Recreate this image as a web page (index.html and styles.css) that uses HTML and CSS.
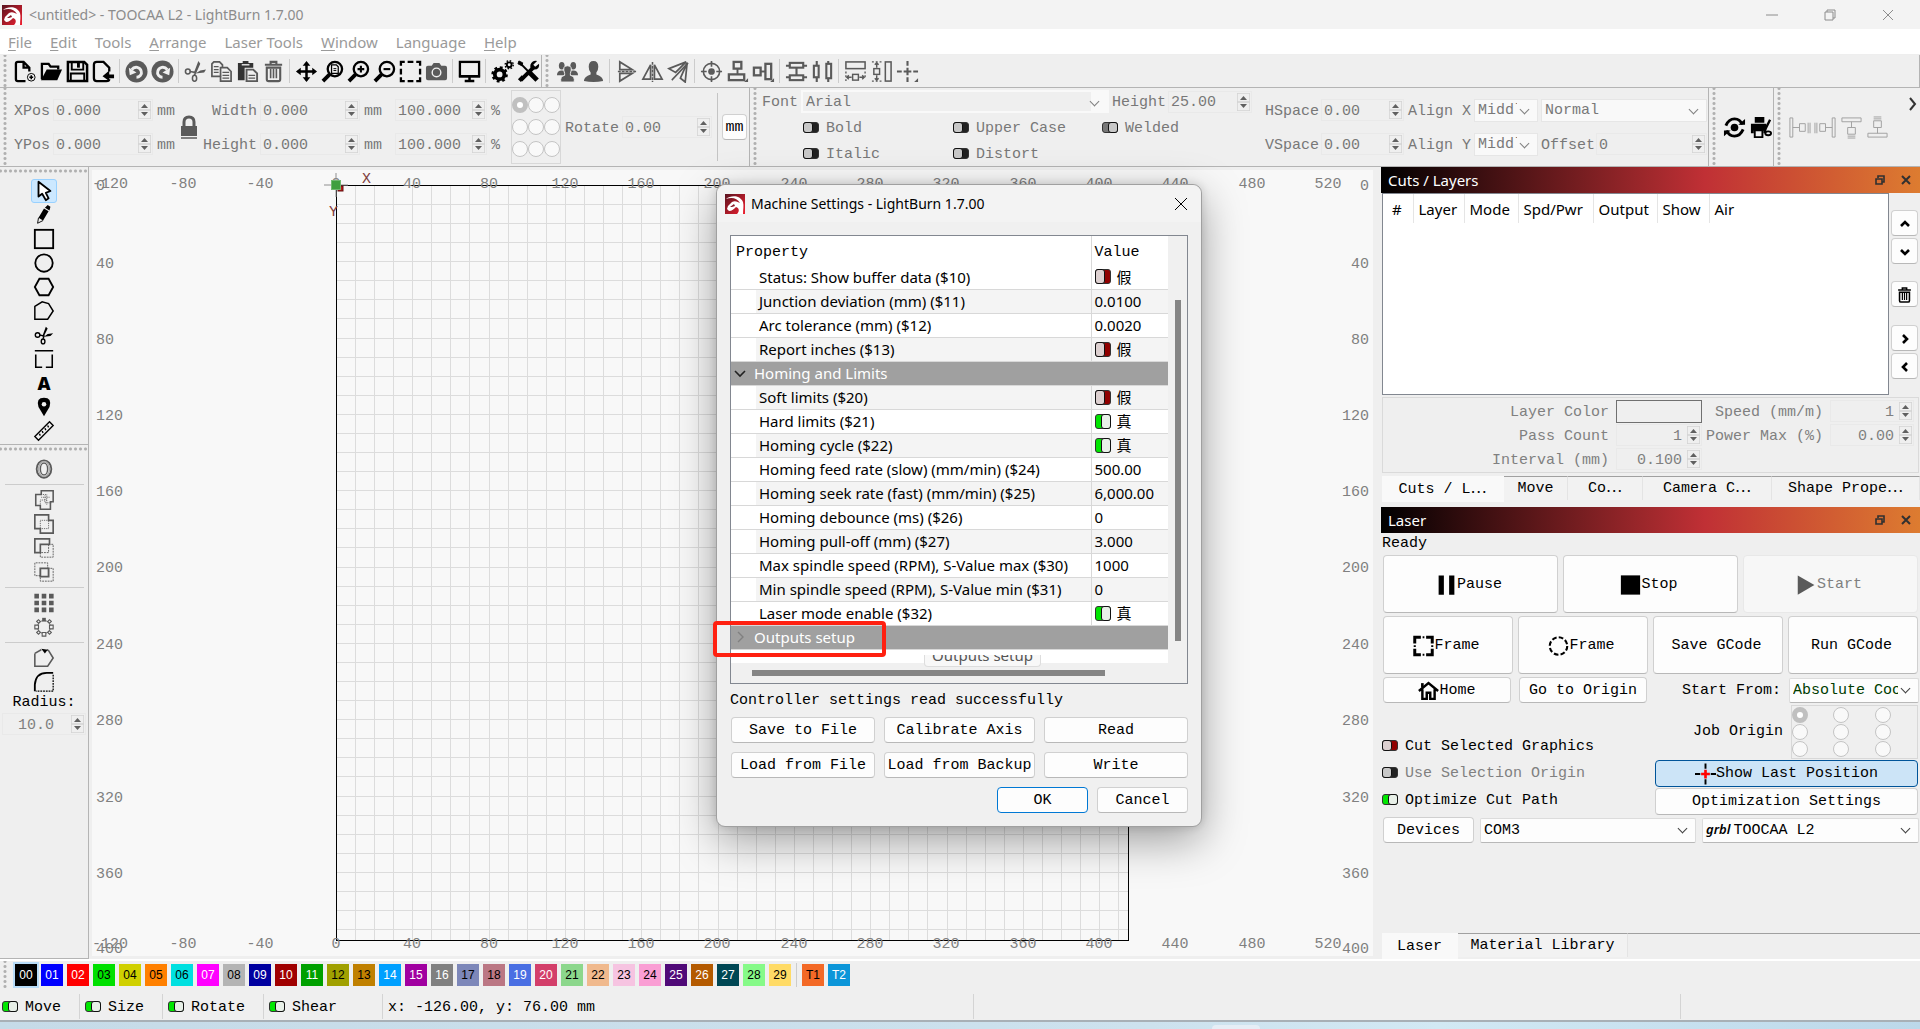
FILE: index.html
```html
<!DOCTYPE html>
<html lang="en">
<head>
<meta charset="utf-8">
<title>&lt;untitled&gt; - TOOCAA L2 - LightBurn 1.7.00</title>
<link rel="stylesheet" href="styles.css">
</head>
<body>
<svg class="defs" aria-hidden="true">
<defs>
<linearGradient id="red" x1="0" y1="0" x2="1" y2="1"><stop offset="0" stop-color="#5a1420"/><stop offset="1" stop-color="#f02030"/></linearGradient>
<symbol id="logo" viewBox="0 0 20 20"><rect width="20" height="20" fill="url(#red)"/><path d="M1 5C6 1 15 1 18 8C19 12 18 15 18 20H12C15 17 14 14 11 13C9 15 7 17 4 17L2 15L3 12L7 8C10 6 13 8 15 9C12 4 7 3 1 5Z" fill="#fff"/><path d="M5 13L9 10L10 12L7 13Z" fill="#8a1826"/></symbol>
<symbol id="new" viewBox="0 0 24 24"><path d="M12 22H4Q2 22 2 20V4Q2 2 4 2H10L16 8V12M10 2V8H16" stroke-width="2.4"/><circle cx="18" cy="18" r="4"/><path d="M18 16V20M16 18H20" stroke-width="1.6"/></symbol>
<symbol id="open" viewBox="0 0 24 24"><path d="M2 20V4H9L11 7H19V10" stroke-width="2.4"/><path d="M7 10H23L18 21H1Z" fill="currentColor" stroke="none"/></symbol>
<symbol id="save" viewBox="0 0 24 24"><path d="M2 2H19L22 5V22H2Z" stroke-width="2.6"/><path d="M6 2H18V10H6ZM5 14H19V22H5Z" stroke-width="2"/><path d="M13 3V8" stroke-width="3"/></symbol>
<symbol id="import" viewBox="0 0 24 24"><path d="M18 12V8L12 2H5Q2 2 2 5V19Q2 22 5 22H15Q18 22 18 20" stroke-width="2.4"/><path d="M11 17L18 11V15H23V19H18V22Z" fill="currentColor" stroke="none"/></symbol>
<symbol id="undo" viewBox="0 0 24 24"><circle cx="12" cy="12" r="11.500" fill="currentColor" stroke="none"/><path d="M7 10C10 6 16 7 17 12C18 15 15 18 12 18" stroke="#efefef" stroke-width="3"/><path d="M4 8L12 13L5 16Z" fill="#efefef" stroke="none"/></symbol>
<symbol id="redo" viewBox="0 0 24 24"><circle cx="12" cy="12" r="11.500" fill="currentColor" stroke="none"/><path d="M17 10C14 6 8 7 7 12C6 15 9 18 12 18" stroke="#efefef" stroke-width="3"/><path d="M20 8L12 13L19 16Z" fill="#efefef" stroke="none"/></symbol>
<symbol id="cut" viewBox="0 0 24 24"><circle cx="4" cy="12" r="2.5" stroke-width="1.6"/><ellipse cx="11" cy="19" rx="2.2" ry="3.2" stroke-width="1.6"/><path d="M6 12L12 13L11 16" stroke-width="1.6"/><path d="M10 14L15 1L17 4L13 13ZM12 14L17 11L23 10L21 13Z" fill="currentColor" stroke="none"/></symbol>
<symbol id="copy" viewBox="0 0 24 24"><path d="M12 17H2V4L4 2H10L13 5V7M11 8H18L22 12V22H11Z" stroke-width="1.8"/><path d="M4 7H9M4 10H9M4 13H9M13 13H20M13 16H20M13 19H20" stroke-width="1.3"/></symbol>
<symbol id="paste" viewBox="0 0 24 24"><path d="M2 3H7V1H13V3H18V8H9V21H2Z" fill="#333" stroke="none"/><path d="M6 5H14" stroke="#efefef" stroke-width="1.4"/><path d="M11 10H18L22 14V22H11Z" stroke-width="2"/><path d="M13 16H20M13 19H20" stroke-width="1.3"/></symbol>
<symbol id="trash" viewBox="0 0 24 24"><path d="M3 5H21M9 4V2H15V4M5 8V20Q5 22 7 22H17Q19 22 19 20V8Z" stroke-width="2.2"/><path d="M9 9V19M12 9V19M15 9V19" stroke-width="1.7"/></symbol>
<symbol id="move" viewBox="0 0 24 24"><path d="M12 3V21M3 12H21" stroke-width="2.6"/><path d="M12 1L16 6H8ZM12 23L16 18H8ZM1 12L6 8V16ZM23 12L18 8V16Z" fill="currentColor" stroke="none"/></symbol>
<symbol id="zpage" viewBox="0 0 24 24"><circle cx="14.500" cy="9.500" r="7.500" stroke-width="2.400"/><path d="M9 15L2 22" stroke-width="4"/><path d="M11 5H16L18 7V14H11Z" stroke-width="1.3"/><path d="M13 9H16M13 11H16" stroke-width="1"/></symbol>
<symbol id="zin" viewBox="0 0 24 24"><circle cx="14.500" cy="9.500" r="7.500" stroke-width="2.400"/><path d="M9 15L2 22" stroke-width="4"/><path d="M14.500 6V13M11 9.500H18" stroke-width="2.200"/></symbol>
<symbol id="zout" viewBox="0 0 24 24"><circle cx="14.500" cy="9.500" r="7.500" stroke-width="2.400"/><path d="M9 15L2 22" stroke-width="4"/><path d="M11 9.500H18" stroke-width="2.200"/></symbol>
<symbol id="frame" viewBox="0 0 24 24"><path d="M2 6V2H6M9 2H15M18 2H22V6M22 9V15M22 18V22H18M15 22H9M6 22H2V18M2 15V9" stroke-width="2.400"/></symbol>
<symbol id="camera" viewBox="0 0 24 24"><path d="M1 8Q1 6 3 6H7L9 3H15L17 6H21Q23 6 23 8V19Q23 21 21 21H3Q1 21 1 19Z" fill="currentColor" stroke="none"/><circle cx="12" cy="13" r="4.500" stroke="#efefef" stroke-width="1.500"/></symbol>
<symbol id="monitor" viewBox="0 0 24 24"><rect x="2" y="2" width="20" height="15" stroke-width="2.400"/><path d="M1 17H23M12 17V21M7 22H17" stroke-width="2.600"/></symbol>
<symbol id="gears" viewBox="0 0 24 24"><circle cx="9" cy="15" r="5" stroke-width="4"/><circle cx="9" cy="15" r="7.300" stroke-width="2.600" stroke-dasharray="2.900 2.830"/><circle cx="19" cy="5" r="2.500" stroke-width="2"/><circle cx="19" cy="5" r="4.200" stroke-width="1.500" stroke-dasharray="1.650 1.650"/></symbol>
<symbol id="tools" viewBox="0 0 24 24"><path d="M21 21L13 13" stroke-width="5"/><path d="M13 13L4 4" stroke-width="2"/><path d="M2 1L6 3L5 6L1 4Z" fill="currentColor"/><path d="M4 21L17 8" stroke-width="4"/><path d="M21 1L17 5L19 7L23 4Q24 10 18 10Q13 10 14 5Q16 0 21 1ZM1 20L5 16L8 19L4 23Z" fill="currentColor" stroke="none"/></symbol>
<symbol id="group" viewBox="0 0 24 24"><g fill="currentColor" stroke="none"><ellipse cx="6" cy="6" rx="3" ry="4"/><ellipse cx="18" cy="6" rx="3" ry="4"/><path d="M1 16Q1 11 6 11Q12 11 12 16ZM12 16Q12 11 18 11Q23 11 23 16Z"/></g><g fill="currentColor" stroke="#efefef" stroke-width="1"><path d="M5 23Q4 17 9 16V14Q6 6 12 6Q18 6 15 14V16Q20 17 19 23Z"/></g></symbol>
<symbol id="person" viewBox="0 0 24 24"><path d="M2 22Q2 17 9 15V13Q7 11 7 7Q7 1 12 1Q17 1 17 7Q17 11 15 13V15Q22 17 22 22Q12 24 2 22Z" fill="currentColor" stroke="none"/></symbol>
<symbol id="flipv" viewBox="0 0 24 24"><path d="M5 10V2L18 10ZM5 14V22L18 14Z" stroke-width="1.800"/><path d="M3 12H22" stroke-width="1.600" stroke-dasharray="3 1"/></symbol>
<symbol id="fliph" viewBox="0 0 24 24"><path d="M10 20H2L10 5ZM14 20H22L14 5Z" stroke-width="1.800"/><path d="M12 2V23" stroke-width="1.600" stroke-dasharray="3 1"/></symbol>
<symbol id="flipd" viewBox="0 0 24 24"><path d="M2 9L20 2L9 13ZM14 19L21 3L19 23Z" stroke-width="1.800"/><path d="M5 21L22 3" stroke-width="1.600"/></symbol>
<symbol id="target" viewBox="0 0 24 24"><circle cx="12" cy="12" r="8.500" stroke-width="1.700"/><circle cx="12" cy="12" r="3.500" fill="currentColor" stroke="none"/><path d="M12 1V7M12 17V23M1 12H7M17 12H23" stroke-width="1.700"/></symbol>
<symbol id="alv" viewBox="0 0 24 24"><rect x="8" y="2" width="8" height="7" stroke-width="2.400"/><rect x="3" y="15" width="16" height="6" stroke-width="2.400"/><path d="M12 9V15" stroke-width="2"/><path d="M23 19V23H19Z" fill="currentColor" stroke="none"/></symbol>
<symbol id="alh" viewBox="0 0 24 24"><rect x="2" y="8" width="7" height="8" stroke-width="2.400"/><rect x="14" y="4" width="6" height="16" stroke-width="2.400"/><path d="M9 12H14" stroke-width="2"/><path d="M23 19V23H19Z" fill="currentColor" stroke="none"/></symbol>
<symbol id="divv" viewBox="0 0 24 24"><rect x="5" y="3" width="14" height="5" stroke-width="2.200"/><rect x="5" y="16" width="14" height="5" stroke-width="2.200"/><path d="M1 6H5M19 6H23M1 18H5M19 18H23M12 8V16" stroke-width="2.200"/></symbol>
<symbol id="divh" viewBox="0 0 24 24"><rect x="3" y="6" width="5" height="12" stroke-width="2.200"/><rect x="16" y="4" width="5" height="15" stroke-width="2.200"/><path d="M6 1V6M6 18V23M18 1V4M18 19V23" stroke-width="2.200"/></symbol>
<symbol id="samew" viewBox="0 0 24 24"><rect x="2" y="2" width="20" height="7" stroke-width="1.600"/><path d="M2 12V23M22 12V18" stroke-width="1.400" stroke-dasharray="2 2"/><rect x="9" y="15" width="6" height="6" stroke-width="1.500"/><path d="M3 18H8M16 18H21M5 16L3 18L5 20M19 16L21 18L19 20" stroke-width="1.500"/></symbol>
<symbol id="sameh" viewBox="0 0 24 24"><rect x="16" y="2" width="6" height="20" stroke-width="1.600"/><path d="M2 2H12M2 22H12" stroke-width="1.400" stroke-dasharray="2 2"/><rect x="4" y="9" width="6" height="6" stroke-width="1.500"/><path d="M7 3V8M7 16V21M5 5L7 3L9 5M5 19L7 21L9 19" stroke-width="1.500"/></symbol>
<symbol id="cross" viewBox="0 0 24 24"><path d="M12 1V6M12 8V16M12 18V23M1 12H6M8 12H16M18 12H23" stroke-width="2.200"/><path d="M23 19V23H19Z" fill="currentColor" stroke="none"/></symbol>
<symbol id="lock" viewBox="0 0 18 24"><rect x="1" y="11" width="16" height="10" fill="currentColor" stroke="none"/><path d="M4 11V7Q4 2 9 2Q14 2 14 7V11" stroke-width="3"/><path d="M1 23H17" stroke-width="1.500"/></symbol>
<symbol id="cycle" viewBox="0 0 24 24"><path d="M3 10Q6 3 12 3Q18 3 20 9M21 14Q18 21 12 21Q6 21 4 15" stroke-width="3"/><path d="M16 9H23V3ZM8 15H1V21Z" fill="currentColor" stroke="none"/><circle cx="12" cy="12" r="4" fill="currentColor" stroke="none"/></symbol>
<symbol id="printcut" viewBox="0 0 24 24"><path d="M6 1H16V7H6ZM2 8H18V18H15V15H5V18H2Z" fill="currentColor" stroke="none"/><path d="M6 15H14V22H6Z" stroke-width="2"/><path d="M22 4L16 16" stroke-width="2.500"/><ellipse cx="20" cy="18" rx="3" ry="2" stroke-width="2"/></symbol>
<symbol id="dockl" viewBox="0 0 24 24"><path d="M2 2H5V22H2ZM12 8H18V16H12ZM5 12H12M21 7V18M23 7V18" stroke-width="1"/></symbol>
<symbol id="dockr" viewBox="0 0 24 24"><path d="M22 2H19V22H22ZM12 8H6V16H12ZM19 12H12M3 7V18M1 7V18" stroke-width="1"/></symbol>
<symbol id="dockt" viewBox="0 0 24 24"><path d="M2 2H22V6H2ZM8 12H16V19H8ZM12 6V12M8 21H16M8 23H16" stroke-width="1"/></symbol>
<symbol id="dockb" viewBox="0 0 24 24"><path d="M2 22H22V18H2ZM8 12H16V5H8ZM12 18V12M8 3H16M8 1H16" stroke-width="1"/></symbol>
<symbol id="arrow" viewBox="0 0 24 24"><path d="M6 2V18L10 15L14 22L17 20L14 14L19 12Z" stroke-width="2" fill="#fff" stroke-linejoin="round"/></symbol>
<symbol id="pencil" viewBox="0 0 24 24"><path d="M13 4L16 1L19 3L18 7ZM12 5L17 8L11 18L6 15Z" fill="currentColor" stroke="none"/><path d="M6 15L5 21L11 18" stroke-width="1"/></symbol>
<symbol id="sq" viewBox="0 0 24 24"><rect x="2" y="2" width="20" height="20"/></symbol>
<symbol id="circ" viewBox="0 0 24 24"><circle cx="12" cy="12" r="9.500"/></symbol>
<symbol id="hex" viewBox="0 0 24 24"><path d="M7 3H17L22 12L17 21H7L2 12Z"/></symbol>
<symbol id="poly" viewBox="0 0 24 24"><path d="M2 7L10 2L17 4L22 12L16 21H2Z" stroke-width="1.600"/></symbol>
<symbol id="scis" viewBox="0 0 24 24"><circle cx="5" cy="12" r="2.500" stroke-width="1.500"/><ellipse cx="11" cy="19" rx="2" ry="2.700" stroke-width="1.500"/><path d="M7 12L12 13L11 16" stroke-width="1.500"/><path d="M10 14L14 3L16 5L12 13ZM12 14L16 11L22 10L19 13Z" fill="currentColor" stroke="none"/></symbol>
<symbol id="tab" viewBox="0 0 24 24"><path d="M2 3H22M3 7V21H10M14 21H21V7" stroke-width="1.700"/></symbol>
<symbol id="pin" viewBox="0 0 24 24"><path d="M12 22L6 12Q3 2 12 2Q21 2 18 12Z" fill="currentColor" stroke="none"/><circle cx="12" cy="9" r="2.500" fill="#efefef" stroke="none"/></symbol>
<symbol id="ruler" viewBox="0 0 24 24"><path d="M2 18L18 2L22 6L6 22ZM7 15L8 17M10 12L11 14M13 9L14 11M16 6L17 8" stroke-width="1.500"/></symbol>
<symbol id="offset" viewBox="0 0 24 24"><ellipse cx="12" cy="12" rx="8" ry="9.500" stroke-width="2"/><ellipse cx="12" cy="12" rx="4" ry="6.500" stroke-width="1.600"/><ellipse cx="12" cy="12" rx="6" ry="8" stroke="#aaa" stroke-width="1.500"/></symbol>
<symbol id="weld" viewBox="0 0 24 24"><path d="M3 6H9V2H22V14H19V22H8V18H3Z" stroke-width="1.700"/><path d="M9 6H15V18M9 9H19M8 18V12H15M13 7V15H21" stroke-width="1" stroke-dasharray="1 1"/></symbol>
<symbol id="union" viewBox="0 0 24 24"><path d="M2 2H17V8H22V22H8V17H2Z" stroke-width="1.800"/><path d="M8 8H17V17H8Z" stroke-width="1" stroke-dasharray="1 1"/></symbol>
<symbol id="sub" viewBox="0 0 24 24"><path d="M2 2H18V8H8V17H2Z" stroke-width="1.800"/><path d="M17 8H22V22H8V17H17V8" stroke-width="1" stroke-dasharray="2 1"/></symbol>
<symbol id="inter" viewBox="0 0 24 24"><path d="M8 8H17V17H8Z" stroke-width="2"/><path d="M8 16H2V2H16V8M16 8H22V22H8V16" stroke-width="1" stroke-dasharray="2 1"/></symbol>
<symbol id="grid9" viewBox="0 0 24 24"><path d="M4 2V22M12 2V22M20 2V22" stroke-width="5" stroke-dasharray="5 2.500"/></symbol>
<symbol id="radial" viewBox="0 0 24 24"><g stroke-width="1.200"><circle cx="12" cy="12" r="7" stroke-width="1"/><g fill="#efefef"><path d="M10 18H14V22H10ZM2 10H6V14H2ZM18 10H22V14H18ZM4 6L6 4L8 6L6 8ZM20 6L18 4L16 6L18 8ZM4 18L6 16L8 18L6 20ZM20 18L18 16L16 18L18 20Z"/></g></g><path d="M10 2H14V6H10Z" fill="currentColor" stroke="none"/></symbol>
<symbol id="start" viewBox="0 0 24 24"><path d="M2 7L9 3M15 3L17 4L22 12L16 21H2V7" stroke-width="1.700"/><path d="M9 2L16 3L13 7Z" fill="#000" stroke="none"/></symbol>
<symbol id="fillet" viewBox="0 0 24 24"><path d="M2 22V15Q3 2 15 2H22" stroke-width="2"/><path d="M22 4V22H3" stroke-width="1.400" stroke-dasharray="2 1"/></symbol>
<symbol id="fcirc" viewBox="0 0 24 24"><circle cx="12" cy="12" r="10" stroke-width="2.400" stroke-dasharray="5.350 2.500"/></symbol>
<symbol id="fsq" viewBox="0 0 24 24"><path d="M2 9V2H9M15 2H22V9M22 15V22H15M9 22H2V15" stroke-width="3.400"/><path d="M11 2H13M11 22H13M2 11V13M22 11V13" stroke-width="2.400"/></symbol>
<symbol id="pause" viewBox="0 0 24 24"><path d="M3 1H9V23H3ZM15 1H21V23H15Z" fill="currentColor" stroke="none"/></symbol>
<symbol id="stop" viewBox="0 0 24 24"><path d="M1 1H23V23H1Z" fill="currentColor" stroke="none"/></symbol>
<symbol id="play" viewBox="0 0 24 24"><path d="M2 1L21 12L2 23Z" fill="currentColor" stroke="none"/></symbol>
<symbol id="home" viewBox="0 0 24 24"><path d="M1 12L12 3L23 12M5 10V21H10V14H14V21H19V10" stroke-width="2.800"/><path d="M5 3V8" stroke-width="3"/></symbol>
<symbol id="pos" viewBox="0 0 24 24"><path d="M12 0V6M12 18V24M0 12H6M18 12H24" stroke-width="2.200"/><path d="M12 7V17M7 12H17" stroke="#f00" stroke-width="3"/></symbol>
<symbol id="up" viewBox="0 0 12 12"><path d="M2 8L6 4L10 8" stroke-width="2.600"/></symbol>
<symbol id="down" viewBox="0 0 12 12"><path d="M2 4L6 8L10 4" stroke-width="2.600"/></symbol>
<symbol id="right" viewBox="0 0 12 12"><path d="M4 2L8 6L4 10" stroke-width="2.600"/></symbol>
<symbol id="left" viewBox="0 0 12 12"><path d="M8 2L4 6L8 10" stroke-width="2.600"/></symbol>
<symbol id="chev" viewBox="0 0 12 12"><path d="M1 4L6 9L11 4" stroke-width="1.600"/></symbol>
<symbol id="chevr" viewBox="0 0 12 12"><path d="M4 1L9 6L4 11" stroke-width="1.400"/></symbol>
<symbol id="spin" viewBox="0 0 13 18"><path d="M0 0H13V18H0ZM0 9H13" stroke="#d4d4d4" stroke-width="1.500"/><path d="M3 7L6.500 3L10 7ZM3 11L6.500 15L10 11Z" fill="#606060" stroke="none"/></symbol>
<symbol id="float" viewBox="0 0 12 12"><path d="M4 4V2H10V8H8M2 5H8V10H2Z" stroke-width="1.600"/></symbol>
<symbol id="x" viewBox="0 0 12 12"><path d="M2 2L10 10M10 2L2 10" stroke-width="2"/></symbol>
</defs>
</svg>

<header class="titlebar">
  <svg class="logo"><use href="#logo"/></svg>
  <span class="caption">&lt;untitled&gt; - TOOCAA L2 - LightBurn 1.7.00</span>
  <div class="wincontrols">
    <button aria-label="Minimize"><svg viewBox="0 0 12 12"><path d="M0 6H12"/></svg></button>
    <button aria-label="Restore"><svg viewBox="0 0 12 12"><path d="M1 3H9V11H1ZM3 3V1H11V9H9"/></svg></button>
    <button aria-label="Close"><svg viewBox="0 0 12 12"><path d="M1 1L11 11M11 1L1 11"/></svg></button>
  </div>
</header>

<nav class="menubar">
  <a href="#"><u>F</u>ile</a><a href="#"><u>E</u>dit</a><a href="#">Tools</a><a href="#"><u>A</u>rrange</a><a href="#">Laser Tools</a><a href="#"><u>W</u>indow</a><a href="#">Language</a><a href="#"><u>H</u>elp</a>
</nav>

<div class="toolbar">
  <div class="tools main-tools"><i class="grip"></i>
    <button aria-label="New"><svg><use href="#new"/></svg></button><button aria-label="Open"><svg><use href="#open"/></svg></button><button aria-label="Save"><svg><use href="#save"/></svg></button><button aria-label="Import"><svg><use href="#import"/></svg></button><i class="sep"></i>
    <button class="dim" aria-label="Undo"><svg><use href="#undo"/></svg></button><button class="dim" aria-label="Redo"><svg><use href="#redo"/></svg></button><i class="sep"></i>
    <button class="dim" aria-label="Cut"><svg><use href="#cut"/></svg></button><button class="dim" aria-label="Copy"><svg><use href="#copy"/></svg></button><button class="dim" aria-label="Paste"><svg><use href="#paste"/></svg></button><button class="dim" aria-label="Delete"><svg><use href="#trash"/></svg></button><i class="sep"></i>
    <button aria-label="Pan"><svg><use href="#move"/></svg></button><button aria-label="Zoom to page"><svg><use href="#zpage"/></svg></button><button aria-label="Zoom in"><svg><use href="#zin"/></svg></button><button aria-label="Zoom out"><svg><use href="#zout"/></svg></button><button aria-label="Frame selection"><svg><use href="#frame"/></svg></button><button class="dim" aria-label="Camera"><svg><use href="#camera"/></svg></button><i class="sep"></i>
    <button aria-label="Preview"><svg><use href="#monitor"/></svg></button><i class="sep"></i>
    <button aria-label="Settings"><svg><use href="#gears"/></svg></button><button aria-label="Device settings"><svg><use href="#tools"/></svg></button>
  </div>
  <div class="tools arrange-tools"><i class="grip"></i>
    <button class="dim" aria-label="Group"><svg><use href="#group"/></svg></button><button class="dim" aria-label="Ungroup"><svg><use href="#person"/></svg></button><i class="sep"></i>
    <button class="dim" aria-label="Flip vertical"><svg><use href="#flipv"/></svg></button><button class="dim" aria-label="Flip horizontal"><svg><use href="#fliph"/></svg></button><button class="dim" aria-label="Mirror across line"><svg><use href="#flipd"/></svg></button><i class="sep"></i>
    <button class="dim" aria-label="Align centers"><svg><use href="#target"/></svg></button><button class="dim" aria-label="Align vertical"><svg><use href="#alv"/></svg></button><button class="dim" aria-label="Align horizontal"><svg><use href="#alh"/></svg></button><i class="sep"></i>
    <button class="dim" aria-label="Distribute vertical"><svg><use href="#divv"/></svg></button><button class="dim" aria-label="Distribute horizontal"><svg><use href="#divh"/></svg></button><i class="sep"></i>
    <button class="dim" aria-label="Same width"><svg><use href="#samew"/></svg></button><button class="dim" aria-label="Same height"><svg><use href="#sameh"/></svg></button><button class="dim" aria-label="Move to position"><svg><use href="#cross"/></svg></button>
  </div>
</div>

<div class="propbar">
  <section class="pane numeric"><i class="grip"></i>
    <div class="coords">
      <label for="xp">XPos</label><span class="spin"><input id="xp" value="0.000"><svg><use href="#spin"/></svg></span><span class="u">mm</span>
      <button class="lock" aria-label="Lock aspect ratio"><svg><use href="#lock"/></svg></button>
      <label class="end" for="wd">Width</label><span class="spin"><input id="wd" value="0.000"><svg><use href="#spin"/></svg></span><span class="u">mm</span>
      <span class="spin"><input aria-label="Width percent" value="100.000"><svg><use href="#spin"/></svg></span><span class="u">%</span>
      <label for="yp">YPos</label><span class="spin"><input id="yp" value="0.000"><svg><use href="#spin"/></svg></span><span class="u">mm</span>
      <label class="end" for="ht">Height</label><span class="spin"><input id="ht" value="0.000"><svg><use href="#spin"/></svg></span><span class="u">mm</span>
      <span class="spin"><input aria-label="Height percent" value="100.000"><svg><use href="#spin"/></svg></span><span class="u">%</span>
    </div>
    <div class="anchor">
      <input type="radio" name="anchor" aria-label="Top left" checked><input type="radio" name="anchor" aria-label="Top"><input type="radio" name="anchor" aria-label="Top right">
      <input type="radio" name="anchor" aria-label="Left"><input type="radio" name="anchor" aria-label="Center"><input type="radio" name="anchor" aria-label="Right">
      <input type="radio" name="anchor" aria-label="Bottom left"><input type="radio" name="anchor" aria-label="Bottom"><input type="radio" name="anchor" aria-label="Bottom right">
    </div>
    <label class="rotlabel" for="rot">Rotate</label><span class="spin rot"><input id="rot" value="0.00"><svg><use href="#spin"/></svg></span>
    <i class="bar"></i><button class="btn unit">mm</button>
  </section>
  <section class="pane text"><i class="grip"></i>
    <div class="fontblock">
      <div class="fontrow"><label for="font">Font</label><span class="pick"><select id="font"><option>Arial</option></select></span><label for="fh">Height</label><span class="spin"><input id="fh" value="25.00"><svg><use href="#spin"/></svg></span></div>
      <div class="styles"><label><input type="checkbox" class="tg gray">Bold</label><label><input type="checkbox" class="tg gray">Upper Case</label><label><input type="checkbox" class="tg gray" checked>Welded</label></div>
      <div class="styles"><label><input type="checkbox" class="tg gray">Italic</label><label><input type="checkbox" class="tg gray">Distort</label></div>
    </div>
    <div class="spacing">
      <label for="hs">HSpace</label><span class="spin"><input id="hs" value="0.00"><svg><use href="#spin"/></svg></span><label for="ax">Align X</label><span class="pick"><select id="ax"><option>Middle</option></select></span><span class="pick last"><select aria-label="Text mode"><option>Normal</option></select></span>
      <label for="vs">VSpace</label><span class="spin"><input id="vs" value="0.00"><svg><use href="#spin"/></svg></span><label for="ay">Align Y</label><span class="pick"><select id="ay"><option>Middle</option></select></span><div class="offset last"><label for="off">Offset</label><span class="spin"><input id="off" value="0"><svg><use href="#spin"/></svg></span></div>
    </div>
  </section>
  <section class="pane tools"><i class="grip"></i><button aria-label="Rotary setup"><svg><use href="#cycle"/></svg></button><button aria-label="Print and cut"><svg><use href="#printcut"/></svg></button></section>
  <section class="pane tools docks"><i class="grip"></i><button class="pale" aria-label="Move left"><svg><use href="#dockl"/></svg></button><button class="pale" aria-label="Move right"><svg><use href="#dockr"/></svg></button><button class="pale" aria-label="Move top"><svg><use href="#dockt"/></svg></button><button class="pale" aria-label="Move bottom"><svg><use href="#dockb"/></svg></button></section>
  <button class="more" aria-label="More"><svg viewBox="0 0 10 14"><path d="M2 1L7 7L2 13"/></svg></button>
</div>

<main>
  <aside class="side">
    <div class="vtools create"><i class="hgrip"></i>
      <button class="on" aria-label="Select"><svg><use href="#arrow"/></svg></button><button aria-label="Draw lines"><svg><use href="#pencil"/></svg></button><button aria-label="Rectangle"><svg><use href="#sq"/></svg></button><button aria-label="Ellipse"><svg><use href="#circ"/></svg></button><button aria-label="Polygon"><svg><use href="#hex"/></svg></button><button aria-label="Edit nodes"><svg><use href="#poly"/></svg></button><button aria-label="Trim"><svg><use href="#scis"/></svg></button><button aria-label="Tabs"><svg><use href="#tab"/></svg></button><button class="letter">A</button><button aria-label="Position laser"><svg><use href="#pin"/></svg></button><button aria-label="Measure"><svg><use href="#ruler"/></svg></button>
    </div>
    <div class="vtools modify"><i class="hgrip"></i>
      <button aria-label="Offset shapes"><svg><use href="#offset"/></svg></button><i class="hsep"></i>
      <button aria-label="Weld"><svg><use href="#weld"/></svg></button><button aria-label="Union"><svg><use href="#union"/></svg></button><button aria-label="Subtract"><svg><use href="#sub"/></svg></button><button aria-label="Intersect"><svg><use href="#inter"/></svg></button><i class="hsep"></i>
      <button aria-label="Grid array"><svg><use href="#grid9"/></svg></button><button aria-label="Radial array"><svg><use href="#radial"/></svg></button><i class="hsep"></i>
      <button aria-label="Start point"><svg><use href="#start"/></svg></button><button class="black" aria-label="Radius tool"><svg><use href="#fillet"/></svg></button>
      <label for="rad">Radius:</label><span class="spin"><input id="rad" value="10.0"><svg><use href="#spin"/></svg></span>
    </div>
  </aside>

  <svg class="canvas" role="img" aria-label="Work area">
    <defs><pattern id="cells" x="244" y="15" width="229" height="229" patternUnits="userSpaceOnUse"><path d="M.5 0V229M19.500 0V229M38.500 0V229M57.500 0V229M76.500 0V229M95.500 0V229M114.500 0V229M133.500 0V229M153.500 0V229M172.500 0V229M191.500 0V229M210.500 0V229M0 .5H229M0 19.500H229M0 38.500H229M0 57.500H229M0 76.500H229M0 95.500H229M0 114.500H229M0 133.500H229M0 153.500H229M0 172.500H229M0 191.500H229M0 210.500H229" stroke="#dcdcdc"/></pattern></defs>
    <rect x="244.500" y="15.500" width="792" height="755" fill="url(#cells)" stroke="#000"/>
    <g text-anchor="middle">
      <text x="18" y="18">-120</text><text x="91" y="18">-80</text><text x="168" y="18">-40</text><text x="244" y="18">0</text><text x="320" y="18">40</text><text x="397" y="18">80</text><text x="473" y="18">120</text><text x="549" y="18">160</text><text x="625" y="18">200</text><text x="702" y="18">240</text><text x="778" y="18">280</text><text x="854" y="18">320</text><text x="931" y="18">360</text><text x="1007" y="18">400</text><text x="1083" y="18">440</text><text x="1160" y="18">480</text><text x="1236" y="18">520</text>
      <text x="18" y="778">-120</text><text x="91" y="778">-80</text><text x="168" y="778">-40</text><text x="244" y="778">0</text><text x="320" y="778">40</text><text x="397" y="778">80</text><text x="473" y="778">120</text><text x="549" y="778">160</text><text x="625" y="778">200</text><text x="702" y="778">240</text><text x="778" y="778">280</text><text x="854" y="778">320</text><text x="931" y="778">360</text><text x="1007" y="778">400</text><text x="1083" y="778">440</text><text x="1160" y="778">480</text><text x="1236" y="778">520</text>
    </g>
    <g><text x="4" y="20">0</text><text x="4" y="98">40</text><text x="4" y="174">80</text><text x="4" y="250">120</text><text x="4" y="326">160</text><text x="4" y="402">200</text><text x="4" y="479">240</text><text x="4" y="555">280</text><text x="4" y="632">320</text><text x="4" y="708">360</text><text x="4" y="783">400</text></g>
    <svg x="100%" overflow="visible"><g text-anchor="end"><text x="-4" y="20">0</text><text x="-4" y="98">40</text><text x="-4" y="174">80</text><text x="-4" y="250">120</text><text x="-4" y="326">160</text><text x="-4" y="402">200</text><text x="-4" y="479">240</text><text x="-4" y="555">280</text><text x="-4" y="632">320</text><text x="-4" y="708">360</text><text x="-4" y="783">400</text></g></svg>
    <text class="axis" x="270" y="13">X</text><text class="axis" x="237" y="46">Y</text>
    <path d="M232 15H256M244 3V27" stroke="#909090"/><rect x="246" y="16" width="5" height="5" fill="#c01818" stroke="#601010"/><rect x="239.500" y="10.500" width="9" height="9" fill="#3f9f3f" stroke="#70b870"/>
  </svg>

  <aside class="dock">
    <section class="cuts">
      <h2>Cuts / Layers<span><button aria-label="Float"><svg><use href="#float"/></svg></button><button aria-label="Close"><svg><use href="#x"/></svg></button></span></h2>
      <div class="layers">
        <div class="list"><table><thead><tr><th>#</th><th>Layer</th><th>Mode</th><th>Spd/Pwr</th><th>Output</th><th>Show</th><th>Air</th></tr></thead></table></div>
        <div class="order"><button class="btn" aria-label="Up"><svg><use href="#up"/></svg></button><button class="btn" aria-label="Down"><svg><use href="#down"/></svg></button><button class="btn del" aria-label="Delete layer"><svg><use href="#trash"/></svg></button><button class="btn" aria-label="Next"><svg><use href="#right"/></svg></button><button class="btn" aria-label="Previous"><svg><use href="#left"/></svg></button></div>
      </div>
      <div class="params">
        <label for="lc">Layer Color</label><button id="lc" class="color" aria-label="Layer Color"></button><label for="sp">Speed (mm/m)</label><span class="spin r"><input id="sp" value="1"><svg><use href="#spin"/></svg></span>
        <label for="pc">Pass Count</label><span class="spin r"><input id="pc" value="1"><svg><use href="#spin"/></svg></span><label for="pm">Power Max (%)</label><span class="spin r"><input id="pm" value="0.00"><svg><use href="#spin"/></svg></span>
        <label for="iv">Interval (mm)</label><span class="spin r"><input id="iv" value="0.100"><svg><use href="#spin"/></svg></span>
      </div>
      <div class="tabs top"><button class="on">Cuts / L<span>…</span></button><button>Move</button><button>Co<span>…</span></button><button>Camera C<span>…</span></button><button>Shape Prope<span>…</span></button></div>
    </section>
    <section class="laser">
      <h2>Laser<span><button aria-label="Float"><svg><use href="#float"/></svg></button><button aria-label="Close"><svg><use href="#x"/></svg></button></span></h2>
      <p>Ready</p>
      <div class="three"><button class="btn"><svg><use href="#pause"/></svg>Pause</button><button class="btn"><svg><use href="#stop"/></svg>Stop</button><button class="btn" disabled><svg><use href="#play"/></svg>Start</button></div>
      <div class="four"><button class="btn"><svg><use href="#fsq"/></svg>Frame</button><button class="btn"><svg><use href="#fcirc"/></svg>Frame</button><button class="btn">Save GCode</button><button class="btn">Run GCode</button></div>
      <div class="homes"><button class="btn"><svg><use href="#home"/></svg>Home</button><button class="btn">Go to Origin</button><label for="sf">Start From:</label><span class="pick green"><select id="sf"><option>Absolute Coords</option></select></span></div>
      <div class="options">
        <div class="checks"><label><input type="checkbox" class="tg">Cut Selected Graphics</label><label class="off"><input type="checkbox" class="tg gray">Use Selection Origin</label><label><input type="checkbox" class="tg" checked>Optimize Cut Path</label></div>
        <div class="origin"><span>Job Origin</span>
          <div class="anchor wide">
            <input type="radio" name="job" aria-label="Top left" checked><input type="radio" name="job" aria-label="Top"><input type="radio" name="job" aria-label="Top right">
            <input type="radio" name="job" aria-label="Left"><input type="radio" name="job" aria-label="Center"><input type="radio" name="job" aria-label="Right">
            <input type="radio" name="job" aria-label="Bottom left"><input type="radio" name="job" aria-label="Bottom"><input type="radio" name="job" aria-label="Bottom right">
          </div>
          <button class="btn pressed"><svg><use href="#pos"/></svg>Show Last Position</button><button class="btn opt">Optimization Settings</button>
        </div>
      </div>
      <div class="devices"><button class="btn">Devices</button><span class="pick"><select aria-label="Port"><option>COM3</option></select></span><span class="pick dev"><b>grbl</b><select aria-label="Device"><option>TOOCAA L2</option></select></span></div>
    </section>
    <div class="tabs bottom"><button class="on">Laser</button><button>Material Library</button></div>
  </aside>
</main>

<div class="palette"><i class="grip"></i>
<button class="w sel" style="background:#000">00</button><button class="w" style="background:#00f">01</button><button class="w" style="background:#f00">02</button><button style="background:#00e000">03</button><button style="background:#d0d000">04</button><button style="background:#ff8000">05</button><button style="background:#00e0e0">06</button><button class="w" style="background:#f0f">07</button><button style="background:#b4b4b4">08</button><button class="w" style="background:#0000a0">09</button><button class="w" style="background:#a00000">10</button><button class="w" style="background:#00a000">11</button><button style="background:#a0a000">12</button><button style="background:#c08000">13</button><button class="w" style="background:#00a0ff">14</button><button class="w" style="background:#a000a0">15</button><button class="w" style="background:#808080">16</button><button style="background:#7d87b9">17</button><button style="background:#bb7784">18</button><button class="w" style="background:#4a6fe3">19</button><button class="w" style="background:#d33f6a">20</button><button style="background:#8cd78c">21</button><button style="background:#f0b98d">22</button><button style="background:#f6c4e1">23</button><button style="background:#fa9ed4">24</button><button class="w" style="background:#500a78">25</button><button class="w" style="background:#b45a00">26</button><button class="w" style="background:#004754">27</button><button style="background:#86fa88">28</button><button style="background:#ffdb66">29</button><i class="sep"></i><button style="background:#f36926">T1</button><button class="w" style="background:#0c96d9">T2</button>
</div>
<footer class="status">
  <label><input type="checkbox" class="tg" checked>Move</label><label><input type="checkbox" class="tg" checked>Size</label><label><input type="checkbox" class="tg" checked>Rotate</label><label class="shear"><input type="checkbox" class="tg" checked>Shear</label><output>x: -126.00, y: 76.00 mm</output><i></i><i class="end"></i>
</footer>
<div class="taskbar"><i></i></div>

<div class="dialog" role="dialog" aria-labelledby="dt">
  <div class="dtitle"><svg class="logo"><use href="#logo"/></svg><h1 id="dt">Machine Settings - LightBurn 1.7.00</h1><button aria-label="Close"><svg viewBox="0 0 12 12"><path d="M0 0L12 12M12 0L0 12"/></svg></button></div>
  <div class="dbody">
    <div class="tree">
      <table>
        <colgroup><col class="c1"><col></colgroup>
        <thead><tr><th>Property</th><th>Value</th></tr></thead>
        <tbody>
          <tr><td>Status: Show buffer data ($10)</td><td><label><input type="checkbox" class="tg">假</label></td></tr>
          <tr class="alt"><td>Junction deviation (mm) ($11)</td><td>0.0100</td></tr>
          <tr><td>Arc tolerance (mm) ($12)</td><td>0.0020</td></tr>
          <tr class="alt"><td>Report inches ($13)</td><td><label><input type="checkbox" class="tg">假</label></td></tr>
          <tr class="group"><td colspan="2"><svg><use href="#chev"/></svg>Homing and Limits</td></tr>
          <tr class="alt"><td>Soft limits ($20)</td><td><label><input type="checkbox" class="tg">假</label></td></tr>
          <tr><td>Hard limits ($21)</td><td><label><input type="checkbox" class="tg" checked>真</label></td></tr>
          <tr class="alt"><td>Homing cycle ($22)</td><td><label><input type="checkbox" class="tg" checked>真</label></td></tr>
          <tr><td>Homing feed rate (slow) (mm/min) ($24)</td><td>500.00</td></tr>
          <tr class="alt"><td>Homing seek rate (fast) (mm/min) ($25)</td><td>6,000.00</td></tr>
          <tr><td>Homing debounce (ms) ($26)</td><td>0</td></tr>
          <tr class="alt"><td>Homing pull-off (mm) ($27)</td><td>3.000</td></tr>
          <tr><td>Max spindle speed (RPM), S-Value max ($30)</td><td>1000</td></tr>
          <tr class="alt"><td>Min spindle speed (RPM), S-Value min ($31)</td><td>0</td></tr>
          <tr><td>Laser mode enable ($32)</td><td><label><input type="checkbox" class="tg" checked>真</label></td></tr>
          <tr class="group shut"><td colspan="2"><svg><use href="#chevr"/></svg>Outputs setup</td></tr>
        </tbody>
      </table>
      <div class="vbar"><i></i></div>
      <div class="hbar"><i></i></div>
      <div class="tip">Outputs setup</div>
    </div>
    <div class="mark"></div>
    <p>Controller settings read successfully</p>
    <div class="actions"><button class="btn">Save to File</button><button class="btn">Calibrate Axis</button><button class="btn">Read</button><button class="btn">Load from File</button><button class="btn">Load from Backup</button><button class="btn">Write</button></div>
    <div class="confirm"><button class="btn ok">OK</button><button class="btn">Cancel</button></div>
  </div>
</div>
</body>
</html>
```
FILE: styles.css
```css
* { box-sizing: border-box; }
body {
  margin: 0; min-height: 100vh; display: flex; flex-direction: column; position: relative;
  background: #efefef; color: #000; overflow-x: hidden;
  font: 15px/20px "Liberation Mono", "Noto Sans CJK SC", monospace;
}
button, input, select { font: inherit; color: inherit; margin: 0; padding: 0; border: 0; background: none; border-radius: 0; }
svg { fill: none; stroke: currentColor; display: block; flex: none; }
i { flex: none; }
.defs { position: absolute; width: 0; height: 0; }
.logo { width: 20px; height: 20px; stroke: none; }

/* title and menu */
.titlebar { height: 29px; display: flex; align-items: center; gap: 7px; padding: 0 3px 0 2px; background: #f3f3f3; color: #8c8c8c; font-family: "Noto Sans", sans-serif; font-size: 14px; }
.wincontrols { margin-left: auto; display: flex; }
.wincontrols button { width: 58px; height: 28px; display: grid; place-items: center; }
.wincontrols svg { width: 12px; height: 12px; }
.menubar { height: 26px; display: flex; align-items: center; gap: 18px; padding-left: 8px; background: #fff; border-bottom: 1px solid #eee; font-family: "Noto Sans", sans-serif; }
.menubar a { color: #9a9a9a; text-decoration: none; }
.menubar u { text-underline-offset: 2px; }

/* icon toolbar */
.toolbar { height: 33px; display: flex; border-bottom: 1px solid #b4b4b4; }
.tools { display: flex; align-items: center; }
.tools button { width: 26px; height: 26px; display: grid; place-items: center; }
.tools svg { width: 23px; height: 23px; }
.dim { color: #5a5a5a; }
.pale { color: #a0a0a0; }
.main-tools { border-right: 1px solid #b4b4b4; }
.arrange-tools { flex: 1; border-right: 1px solid #b4b4b4; }
.grip { width: 12px; height: 100%; background: radial-gradient(circle, #b0b0b0 1px, transparent 2px) 3px 3px / 4px 5px repeat-y; }
.sep { width: 7px; height: 24px; background: linear-gradient(#ccc, #ccc) 3px 0 / 1px 100% no-repeat; }

/* property toolbar */
.propbar { height: 79px; display: flex; color: #787878; border-bottom: 1px solid #b4b4b4; }
.pane { display: flex; align-items: center; border-right: 1px solid #b4b4b4; }
.pane.tools { color: #000; }
.docks { border: 0; padding-right: 12px; }
.numeric > .grip { width: 14px; }
.coords { display: grid; grid-template-columns: 39px 104px 23px 23px 57px 104px 31px 96px 20px; grid-auto-rows: 34px; align-items: center; }
.coords .spin { margin-right: 4px; }
.propbar label, .propbar .u, .params label, .spin input { padding-top: 3px; }
.end { text-align: right; padding-right: 3px; }
.lock { grid-row: 1 / 3; grid-column: 4; }
.lock svg { width: 18px; height: 24px; color: #5a5a5a; }
.spin { display: flex; align-items: center; height: 22px; border: 1px solid #e9e9e9; padding-right: 1px; }
.spin input { flex: 1; min-width: 0; width: 0; height: 20px; padding-left: 2px; }
.spin svg { width: 13px; height: 18px; }
.spin.r input { text-align: right; padding-right: 5px; }
.anchor { display: grid; grid-template-columns: repeat(3, 16px); width: 50px; height: 74px; align-content: space-evenly; border: 1px solid #d8d8d8; }
.anchor input { appearance: none; width: 16px; height: 16px; border: 1px solid #c4c4c4; border-radius: 50%; background: #f9f9f9; }
.anchor input:checked { border: 5px solid #c0c0c0; background: #fff; }
.rotlabel { padding-right: 3px; padding-left: 4px; }
.rot { width: 90px; }
.bar { width: 1px; height: 68px; background: #c4c4c4; margin: 0 4px 0 5px; }
.btn { display: flex; align-items: center; justify-content: center; color: #000; background: #fdfdfd; border: 1px solid #d0d0d0; border-bottom-color: #b8b8b8; border-radius: 4px; white-space: nowrap; min-width: 0; padding-top: 1px; }
.unit { width: 25px; height: 26px; margin-right: 2px; }
.pick { position: relative; display: flex; background: #f9f9f9; border: 1px solid #e6e6e6; min-width: 0; height: 23px; }
.pick select { appearance: none; flex: 1; min-width: 0; width: 0; padding: 1px 20px 0 3px; }
.pick::after { content: ""; position: absolute; right: 9px; top: 6px; width: 6px; height: 6px; border: solid #808080; border-width: 0 1px 1px 0; transform: rotate(45deg); pointer-events: none; }
.fontblock { display: grid; grid-template-rows: 27px 25px 26px; align-items: center; width: 493px; }
.fontrow { display: grid; grid-template-columns: 39px 311px 56px 84px; align-items: center; }
.fontrow .pick { margin-right: 3px; background: linear-gradient(to right, #efefef 288px, #f9f9f9 0); border: 2px solid #f9f9f9; }
.styles { display: grid; grid-template-columns: 150px 149px auto; padding-left: 41px; }
.styles label, .checks label, .status label, td label { display: flex; align-items: center; gap: 7px; }
.tg { appearance: none; position: relative; flex: none; width: 16px; height: 11px; border: 1px solid #333; border-radius: 3px; background: #900000; }
.tg::before { content: ""; position: absolute; inset: -1px auto -1px -1px; width: 8px; border: 1px solid #111; border-radius: 3px; background: #ddd0d0; }
.tg:checked { background: #00e600; }
.tg:checked::before { inset: -1px -1px -1px auto; background: #e8f0e8; }
.tg.gray { background: #222; }
.tg.gray::before { background: #c8c8c8; }
.tg.gray:checked { background: #777; }
.styles .tg, .status .tg, .checks .tg { margin-bottom: 3px; }
.spacing { display: grid; grid-template-columns: 56px 83px 70px 64px 169px; grid-auto-rows: 34px; align-items: center; margin-left: 10px; padding-right: 1px; white-space: nowrap; }
.spacing > label:nth-of-type(even) { padding-left: 4px; }
.spacing .last { margin-left: 3px; }
.offset { display: grid; grid-template-columns: 55px 1fr; align-items: center; }
.more { margin-left: auto; color: #333; align-self: flex-start; padding: 9px 2px 0 0; }
.more svg { width: 10px; height: 14px; stroke-width: 2; }

/* work area */
main { flex: 1; display: grid; grid-template-columns: 89px minmax(0, 1fr) 539px; }
.side { border-right: 1px solid #b4b4b4; border-bottom: 1px solid #b4b4b4; }
.vtools { display: flex; flex-direction: column; align-items: center; }
.vtools button { width: 26px; height: 24px; display: grid; place-items: center; border: 1px solid transparent; }
.vtools svg { width: 22px; height: 22px; stroke-width: 2; }
.vtools .on { background: #cce8ff; border-color: #99d1ff; border-radius: 3px; }
.hgrip { align-self: stretch; height: 12px; background: radial-gradient(circle, #b0b0b0 1px, transparent 2px) 3px 2px / 5px 4px repeat-x; }
.create { border-bottom: 1px solid #b4b4b4; padding-bottom: 1px; }
.modify { color: #5a5a5a; }
.modify .black, .modify label { color: #000; }
.modify label { line-height: 18px; }
.modify .spin { width: 84px; margin-top: 1px; color: #808080; }
.modify .spin input { padding-left: 15px; }
.modify .spin svg { width: 13px; height: 18px; }
.letter { font: 900 18px/20px "Noto Sans", sans-serif; }
.hsep { width: 79px; height: 7px; background: linear-gradient(#ccc, #ccc) 0 3px / 100% 1px no-repeat; }
.canvas { width: calc(100% - 11px); height: calc(100% - 6px); margin: 3px 8px 3px 3px; background: #f8f8f8; overflow: hidden; }
.canvas text { fill: #808080; stroke: none; }
.canvas .axis { fill: #804040; }

/* right dock */
.dock { display: flex; flex-direction: column; min-width: 0; }
h2 { margin: 0; height: 26px; display: flex; align-items: center; padding: 0 8px 0 7px; color: #fff; background: linear-gradient(to right, #000, #c03035 60%, #dd7c30); font: 15px/20px "Noto Sans", sans-serif; }
h2 span { margin-left: auto; display: flex; gap: 14px; color: #303030; }
h2 svg { width: 12px; height: 12px; }
.layers { display: flex; }
.list { flex: 1; height: 202px; margin-left: 1px; background: #fff; border: 1px solid #828790; }
.list table { border-collapse: collapse; table-layout: fixed; width: 380px; font: 15px/20px "Noto Sans", sans-serif; }
.list th { font-weight: 400; text-align: left; height: 29px; padding: 0 0 0 5px; border-right: 1px solid #e5e5e5; white-space: nowrap; }
.list th:nth-child(1) { width: 30px; padding-left: 9px; }
.list th:nth-child(2) { width: 51px; }
.list th:nth-child(3) { width: 54px; }
.list th:nth-child(4) { width: 75px; }
.list th:nth-child(5) { width: 64px; }
.list th:nth-child(6) { width: 52px; }
.list th:last-child { border: 0; }
.order { width: 31px; padding: 17px 2px 0; display: flex; flex-direction: column; gap: 2px; }
.order .btn { height: 26px; }
.order .del { margin: 15px 0 16px; }
.order svg { width: 12px; height: 12px; }
.order .del svg { width: 17px; height: 18px; }
.params { display: grid; grid-template-columns: 1fr 86px 128px 84px; grid-auto-rows: 24px; align-items: center; height: 76px; margin: 2px 1px 3px; padding: 1px 4px 0 0; border: 1px solid #dadada; color: #808080; }
.params label { text-align: right; padding-right: 7px; }
.color { height: 23px; border: 1px solid #707070; }
.tabs { display: flex; }
.tabs button { height: 24px; background: #f2f2f2; border-top: 1px solid #a0a0a0; border-right: 1px solid #e4e4e4; white-space: nowrap; }
.tabs .on { height: 26px; background: #f9f9f9; border-color: #f9f9f9; }
.tabs span { font-family: "Noto Sans CJK SC", sans-serif; line-height: 1px; }
.top { height: 31px; padding-left: 1px; }
.top button:nth-child(1) { width: 122px; }
.top button:nth-child(2) { width: 64px; }
.top button:nth-child(3) { width: 75px; }
.top button:nth-child(4) { width: 129px; }
.top button:nth-child(5) { flex: 1; }
.laser { flex: 1; }
.laser p { margin: 1px 0 1px 1px; }
.laser > div { padding: 0 2px; display: grid; gap: 5px; margin-bottom: 3px; }
.laser .three { grid-template-columns: repeat(3, 1fr); }
.laser .four { grid-template-columns: repeat(4, 1fr); }
.three .btn, .four .btn { height: 58px; padding-right: 3px; }
.laser .btn svg { width: 21px; height: 22px; }
.btn:disabled { color: #808080; background: #f7f7f7; border-color: #e8e8e8; }
.btn:disabled svg { color: #5a5a5a; }
.laser .homes { grid-template-columns: 128px 128px 1fr 130px; column-gap: 8px; align-items: center; padding-right: 1px; margin-bottom: 2px; }
.homes .btn { height: 26px; }
.homes label { text-align: right; padding-top: 2px; }
.laser .pick { background: #fdfdfd; border-color: #dcdcdc; border-bottom-color: #b8b8b8; border-radius: 2px; height: 25px; }
.laser .pick::after { border-color: #404040; }
.green { color: #003c00; }
.laser .options { grid-template-columns: 1fr 263px; gap: 0; margin-bottom: 2px; }
.checks { display: grid; align-content: end; padding-bottom: 4px; row-gap: 7px; margin-left: -1px; }
.off { color: #808080; }
.origin { display: grid; grid-template-columns: 1fr 127px; row-gap: 1px; align-items: center; }
.origin > span { text-align: right; padding-right: 8px; }
.wide { width: auto; height: 54px; grid-template-columns: 41px 42px 16px; }
.origin .btn { grid-column: 1 / 3; height: 27px; }
.pressed { background: #cce4f7; border-color: #005499; }
.laser .devices { grid-template-columns: 91px 216px 1fr; column-gap: 6px; align-items: center; padding-right: 1px; }
.devices .btn { height: 26px; }
.dev b { font: italic 600 13px/20px "Noto Sans", sans-serif; padding-left: 3px; }
.bottom { height: 26px; padding-left: 1px; }
.bottom .on { width: 76px; }
.bottom button:nth-child(2) { width: 170px; }
.bottom::after { content: ""; flex: 1; border-top: 1px solid #a0a0a0; }

/* palette, status, taskbar */
.palette { height: 34px; border-top: 2px solid #fff; display: flex; align-items: center; gap: 4px; padding-bottom: 4px; }
.palette .grip { width: 11px; }
.palette .sep { margin: 0 -2px; }
.palette button { width: 22px; height: 22px; font: 12px/20px "Liberation Sans", sans-serif; text-align: center; }
.palette .w { color: #fff; }
.palette .sel { outline: 2px solid #b8dcf8; }
.status { height: 27px; display: flex; align-items: center; padding-left: 2px; }
.status label { padding-right: 18px; margin-right: 5px; height: 25px; border-right: 1px solid #d4d4d4; padding-top: 2px; }
.status .shear { padding-right: 45px; }
.status i { width: 1px; height: 25px; background: #d4d4d4; margin-left: 378px; }
.status output { padding-top: 2px; }
.status .end { margin-left: auto; margin-right: 239px; padding: 0; }
.taskbar { height: 9px; border-top: 2px solid #a8b0b6; background: linear-gradient(to right, #c6dbe8, #cde2ee 60%, #d2e9f4 75%, #bcd8ea); display: flex; }
.taskbar i { width: 48px; margin-left: 1212px; margin-top: 3px; background: #e6eef6; border-radius: 4px 4px 0 0; }

/* machine settings window */
.dialog { position: absolute; top: 184px; left: calc(50% - 244px); width: 486px; background: #f0f0f0; border: 1px solid #a0a0a0; border-radius: 9px; box-shadow: 0 14px 44px rgba(0, 0, 0, .36), 0 0 10px rgba(0, 0, 0, .14); }
.dtitle { height: 37px; display: flex; align-items: center; gap: 6px; padding: 0 14px 0 8px; background: #f3f3f3; border-radius: 9px 9px 0 0; }
h1 { margin: 0; font: 14px/20px "Noto Sans", sans-serif; }
.dtitle button { margin-left: auto; }
.dtitle button svg { width: 12px; height: 12px; }
.dbody { padding: 13px 13px 13px 13px; position: relative; }
.tree { position: relative; height: 449px; display: grid; grid-template: 427px 1fr / 437px 1fr; background: #fff; border: 1px solid #828790; overflow: hidden; }
.tree table { border-collapse: collapse; table-layout: fixed; width: 437px; align-self: start; font: 15px/20px "Noto Sans", "Noto Sans CJK SC", sans-serif; }
.c1 { width: 360px; }
.tree th { height: 29px; font: 15px/20px "Liberation Mono", monospace; text-align: left; padding: 4px 0 0 5px; }
.tree td { height: 24px; padding: 0 0 0 28px; border-bottom: 1px solid #d8d8d8; white-space: nowrap; }
.tree td + td, .tree th + th { border-left: 1px solid #d8d8d8; padding-left: 3px; }
.alt td { background: #f4f4f4; }
.alt td:first-child { background: linear-gradient(to right, #fff 25px, #f4f4f4 0); }
.tree .group td { background: #a0a0a0; color: #fff; padding-left: 23px; position: relative; }
.group svg { position: absolute; left: 3px; top: 5px; width: 12px; height: 12px; color: #222; }
.tree .shut svg { color: #808080; }
.tree .tg { height: 15px; }
.tree td label { gap: 6px; }
.vbar { background: #f0f0f0; padding: 64px 7px 0; }
.vbar i { display: block; height: 341px; width: 6px; background: #858585; }
.hbar { grid-column: 1 / 3; background: #f0f0f0; padding: 7px 0 0 21px; }
.hbar i { display: block; width: 353px; height: 6px; background: #858585; }
.tip { position: absolute; left: 193px; top: 419px; width: 117px; height: 12px; display: flex; align-items: flex-end; justify-content: center; overflow: hidden; background: #f8f8f8; border: 1px solid #ddd; border-top: 0; border-radius: 0 0 4px 4px; color: #555; font: 15px/22px "Noto Sans", sans-serif; }
.mark { position: absolute; left: -4px; top: 399px; width: 173px; height: 36px; border: 4px solid #ff2010; border-radius: 4px; }
.dbody p { margin: 7px 0 6px; }
.actions { display: grid; grid-template-columns: 1fr 151px 1fr; gap: 9px; padding-left: 1px; }
.actions .btn, .confirm .btn { height: 26px; }
.confirm { display: flex; justify-content: flex-end; gap: 9px; margin-top: 9px; }
.confirm .btn { width: 91px; }
.confirm .ok { border-color: #0078d4; }
```
